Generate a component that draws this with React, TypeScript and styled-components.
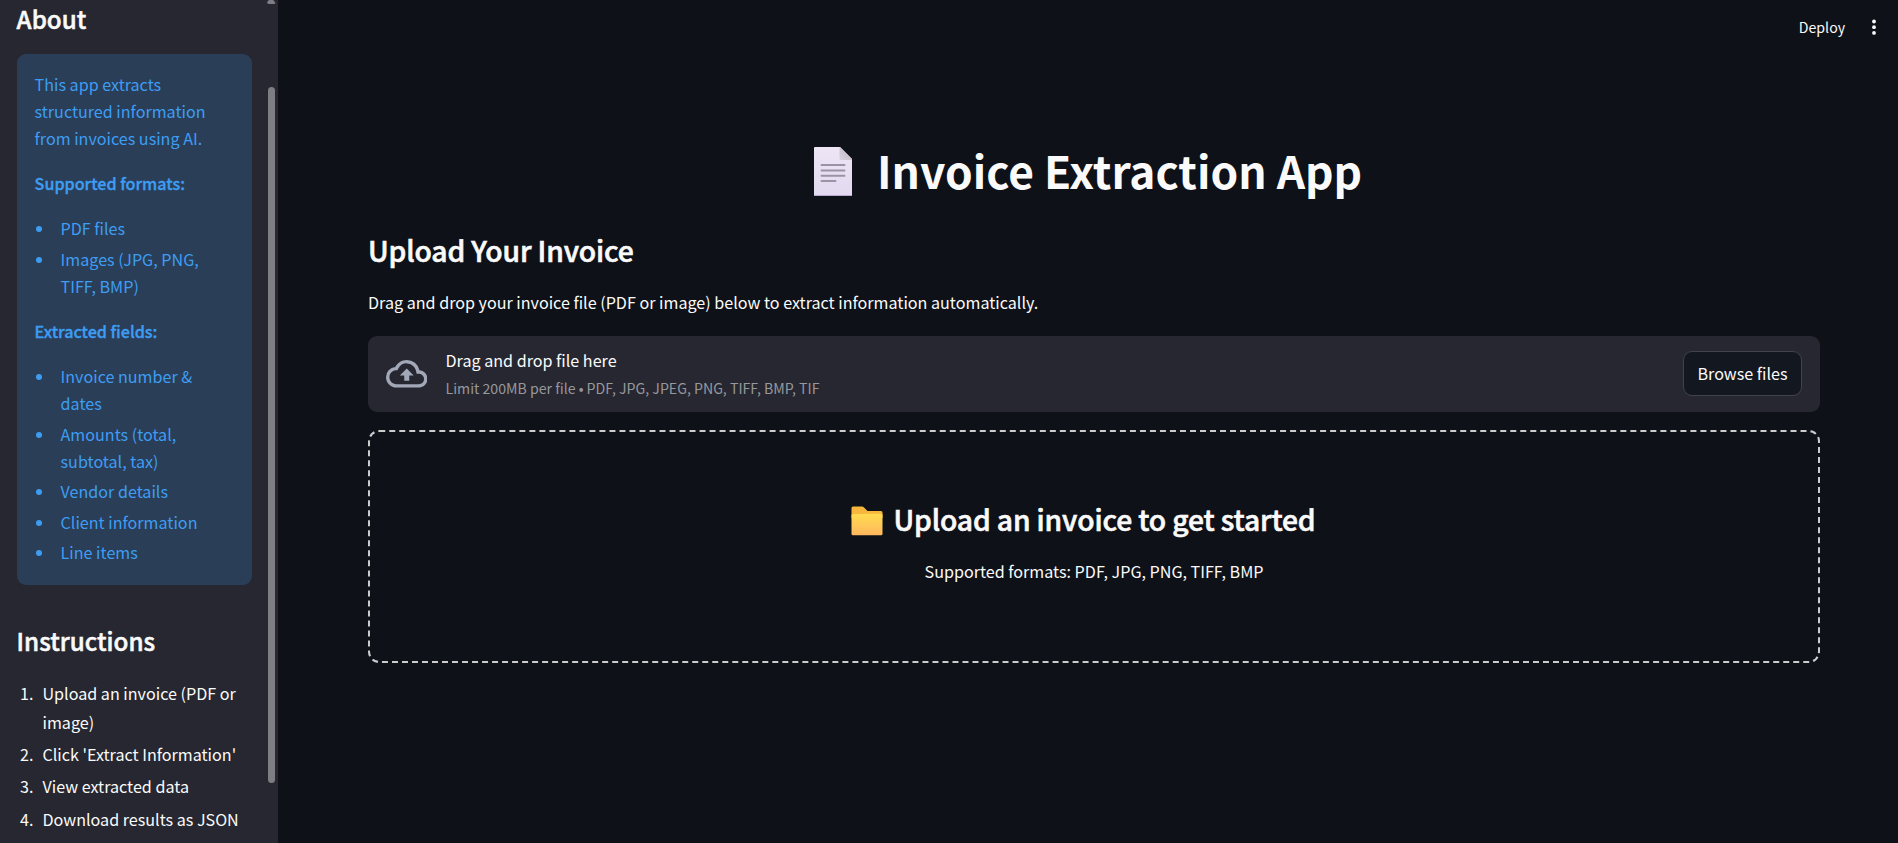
import React from "react";
import styled, { createGlobalStyle } from "styled-components";

const GlobalStyle = createGlobalStyle`
  * { box-sizing: border-box; }
  body {
    margin: 0;
    background: #0e1117;
    color: #fafafa;
    font-family: "Noto Sans CJK JP", "Noto Sans", sans-serif;
    font-size: 16.13px;
    line-height: 28.8px;
    overflow: hidden;
  }
  h1, h2, h3, p, ul, ol { margin: 0; padding: 0; }
  ul, ol { list-style: none; }
`;

const Shell = styled.div`
  display: flex;
  height: 843px;
  overflow: hidden;
`;

const Sidebar = styled.aside`
  display: flex;
  flex: 0 0 278px;
  background: #262730;
  overflow: hidden;
`;

const SidebarContent = styled.div`
  flex: 0 0 252px;
  padding: 3px 0 0 17px;
`;

const SidebarTitle = styled.h2`
  margin-left: -0.4px;
  font-size: 24.2px;
  font-weight: 500;
  -webkit-text-stroke: 0.5px currentColor;
  line-height: 32px;
  white-space: nowrap;
`;

const InfoBox = styled.section`
  margin: 19px 0 39.5px;
  height: 531px;
  padding: 17px 17.6px;
  border-radius: 9px;
  background: #2b3e57;
  color: #3d9df3;
  line-height: 27px;
`;

const InfoText = styled.p<{ $strong?: boolean }>`
  margin-bottom: 18px;
  font-weight: ${(p) => (p.$strong ? 500 : 400)};
  -webkit-text-stroke: ${(p) => (p.$strong ? "0.35px currentColor" : "0")};
  white-space: nowrap;
`;

const BulletList = styled.ul<{ $gap: number }>`
  display: flex;
  flex-direction: column;
  gap: ${(p) => p.$gap}px;
  margin-bottom: 18px;
`;

const Bullet = styled.li`
  display: flex;
  white-space: nowrap;

  &::before {
    content: "";
    flex: none;
    width: 6px;
    height: 6px;
    margin: 11px 18.6px 0 1.4px;
    border-radius: 50%;
    background: currentColor;
  }
`;

const Steps = styled.ol`
  display: flex;
  flex-direction: column;
  gap: 3.6px;
  margin-top: 22.3px;
`;

const Step = styled.li`
  display: flex;
  white-space: nowrap;
`;

const StepNumber = styled.span`
  flex: 0 0 25.5px;
  padding-left: 3px;
`;

const ScrollBar = styled.div`
  display: flex;
  flex-direction: column;
  align-items: center;
  width: 15px;
  margin-left: 12px;
`;

const ScrollArrow = styled.div`
  width: 9px;
  height: 4px;
  border-radius: 0 0 2px 2px;
  background: #7d7d83;
  clip-path: polygon(25% 0, 75% 0, 100% 75%, 100% 100%, 0 100%, 0 75%);
`;

const ScrollThumb = styled.div`
  width: 7px;
  height: 696px;
  margin-top: 83px;
  border-radius: 4px;
  background: #7d7d83;
`;

const Main = styled.main`
  flex: 1;
  display: flex;
  flex-direction: column;
`;

const TopBar = styled.header`
  display: flex;
  justify-content: flex-end;
  align-items: center;
  height: 54px;
  padding-right: 20px;
  gap: 25px;
  font-size: 14.13px;
`;

const Page = styled.div`
  display: flex;
  flex-direction: column;
  padding: 86px 78px 0 90px;
`;

const TitleRow = styled.div`
  display: flex;
  justify-content: center;
  gap: 25px;
  height: 60px;
  padding-right: 12px;
`;

const Title = styled.h1`
  font-size: 44.3px;
  font-weight: 700;
  line-height: 60px;
  white-space: nowrap;
`;

const DocumentIcon = styled.svg`
  flex: none;
  margin-top: 7px;
`;

const SectionTitle = styled.h3`
  font-size: 28.25px;
  font-weight: 500;
  letter-spacing: -0.14px;
  -webkit-text-stroke: 0.6px currentColor;
  line-height: 38px;
  white-space: nowrap;
`;

const UploadTitle = styled(SectionTitle)`
  margin: 30.7px 0 19.3px;
`;

const Lead = styled.p`
  line-height: 29px;
  white-space: nowrap;
`;

const Uploader = styled.section`
  display: flex;
  align-items: center;
  height: 76px;
  margin-top: 19px;
  padding: 0 18px 0 17.5px;
  border-radius: 9px;
  background: #262730;
`;

const UploaderText = styled.div`
  flex: 1;
  margin-left: 18.5px;
  padding-bottom: 2px;
`;

const DropLabel = styled.div`
  line-height: 27px;
`;

const LimitLabel = styled.div`
  margin-top: 3px;
  font-size: 14.13px;
  line-height: 22px;
  color: #97989c;
`;

const BrowseButton = styled.button`
  width: 119px;
  height: 45px;
  padding: 0 0 2px;
  border: 1px solid #41434c;
  border-radius: 9px;
  background: #131720;
  color: inherit;
  font: inherit;
  white-space: nowrap;
`;

const EmptyState = styled.section`
  display: flex;
  flex-direction: column;
  align-items: center;
  height: 233px;
  margin-top: 18px;
  padding-top: 67.7px;
  border: 2px dashed #cccccc;
  border-radius: 11.25px;
`;

const EmptyTitle = styled.div`
  display: flex;
  gap: 11px;
  margin-bottom: 19px;
  padding-right: 22px;
`;

const FolderIcon = styled.svg`
  flex: none;
  margin-top: 6px;
`;

const formats = [["PDF files"], ["Images (JPG, PNG,", "TIFF, BMP)"]];
const fields = [
  ["Invoice number &", "dates"],
  ["Amounts (total,", "subtotal, tax)"],
  ["Vendor details"],
  ["Client information"],
  ["Line items"],
];
const steps = [
  ["Upload an invoice (PDF or", "image)"],
  ["Click 'Extract Information'"],
  ["View extracted data"],
  ["Download results as JSON"],
];

const Lines = ({ lines }: { lines: string[] }) => (
  <span>
    {lines.map((line, i) => (
      <React.Fragment key={line}>
        {i > 0 && <br />}
        {line}
      </React.Fragment>
    ))}
  </span>
);

const Bullets = ({ items, gap }: { items: string[][]; gap: number }) => (
  <BulletList $gap={gap}>
    {items.map((lines) => (
      <Bullet key={lines[0]}>
        <Lines lines={lines} />
      </Bullet>
    ))}
  </BulletList>
);

export default function App() {
  return (
    <>
      <GlobalStyle />
      <Shell>
        <Sidebar>
          <SidebarContent>
            <SidebarTitle>About</SidebarTitle>
            <InfoBox>
              <InfoText>
                <Lines lines={["This app extracts", "structured information", "from invoices using AI."]} />
              </InfoText>
              <InfoText $strong>Supported formats:</InfoText>
              <Bullets items={formats} gap={4} />
              <InfoText $strong>Extracted fields:</InfoText>
              <Bullets items={fields} gap={3.6} />
            </InfoBox>
            <SidebarTitle>Instructions</SidebarTitle>
            <Steps>
              {steps.map((lines, i) => (
                <Step key={lines[0]}>
                  <StepNumber>{i + 1}.</StepNumber>
                  <Lines lines={lines} />
                </Step>
              ))}
            </Steps>
          </SidebarContent>
          <ScrollBar>
            <ScrollArrow />
            <ScrollThumb />
          </ScrollBar>
        </Sidebar>
        <Main>
          <TopBar>
            <span>Deploy</span>
            <svg width="8" height="18" viewBox="0 0 8 18" fill="#fafafa">
              <circle cx="4" cy="3.5" r="1.9" />
              <circle cx="4" cy="9.2" r="1.9" />
              <circle cx="4" cy="14.9" r="1.9" />
            </svg>
          </TopBar>
          <Page>
            <TitleRow>
              <DocumentIcon width="38" height="49" viewBox="0 0 38 49">
                <defs>
                  <linearGradient id="paper" x1="0" y1="0" x2="0" y2="1">
                    <stop offset="0" stopColor="#eee6f5" />
                    <stop offset="1" stopColor="#e2d8f0" />
                  </linearGradient>
                  <linearGradient id="fold" x1="0" y1="1" x2="1" y2="0">
                    <stop offset="0" stopColor="#d9d1df" />
                    <stop offset="1" stopColor="#bdb6c4" />
                  </linearGradient>
                </defs>
                <path d="M1 0H26L38 12V48Q38 49 37 49H1Q0 49 0 48V1Q0 0 1 0Z" fill="url(#paper)" />
                <path d="M0 48H38Q38 49 37 49H1Q0 49 0 48Z" fill="#b9a9cb" />
                <path d="M25.5 0H26L38 12V13H27Q25.5 13 25.5 11.5Z" fill="url(#fold)" />
                <path
                  d="M7.5 18H30.5M7.5 23.5H30.5M7.5 28.8H30.5M7.5 34H21.5"
                  stroke="#9b92a3"
                  strokeWidth="1.9"
                  strokeLinecap="round"
                />
              </DocumentIcon>
              <Title>Invoice Extraction App</Title>
            </TitleRow>
            <UploadTitle>Upload Your Invoice</UploadTitle>
            <Lead>
              Drag and drop your invoice file (PDF or image) below to extract information automatically.
            </Lead>
            <Uploader>
              <svg width="41.5" height="41.5" viewBox="0 0 24 24" fill="#a3a8b8">
                <path d="M19.35 10.04A7.49 7.49 0 0 0 12 4C9.11 4 6.6 5.64 5.35 8.04A5.994 5.994 0 0 0 0 14c0 3.31 2.69 6 6 6h13c2.76 0 5-2.24 5-5 0-2.64-2.05-4.78-4.65-4.96zM19 18H6c-2.21 0-4-1.79-4-4 0-2.05 1.53-3.76 3.56-3.97l1.07-.11.5-.95A5.469 5.469 0 0 1 12 6c2.62 0 4.88 1.86 5.39 4.43l.3 1.5 1.53.11A2.98 2.98 0 0 1 22 15c0 1.65-1.35 3-3 3zM8 13h2.55v3h2.9v-3H16l-4-4-4 4z" />
              </svg>
              <UploaderText>
                <DropLabel>Drag and drop file here</DropLabel>
                <LimitLabel>Limit 200MB per file • PDF, JPG, JPEG, PNG, TIFF, BMP, TIF</LimitLabel>
              </UploaderText>
              <BrowseButton>Browse files</BrowseButton>
            </Uploader>
            <EmptyState>
              <EmptyTitle>
                <FolderIcon width="32" height="30" viewBox="0 0 32 30">
                  <defs>
                    <linearGradient id="folderFront" x1="0" y1="0" x2="0" y2="1">
                      <stop offset="0" stopColor="#ffdc4f" />
                      <stop offset="1" stopColor="#ffb75e" />
                    </linearGradient>
                  </defs>
                  <path d="M0.5 2Q0.5 0.5 2 0.5H11Q12 0.5 13 1.5L16.5 5H30Q31.5 5 31.5 6.5V12H0.5Z" fill="#f6b73c" />
                  <path d="M0.5 9.5Q0.5 8 2 8H12.5Q14 8 15 7.7H30Q31.5 7.7 31.5 9V28Q31.5 29.3 30 29.3H2Q0.5 29.3 0.5 28Z" fill="url(#folderFront)" />
                </FolderIcon>
                <SectionTitle>Upload an invoice to get started</SectionTitle>
              </EmptyTitle>
              <Lead>Supported formats: PDF, JPG, PNG, TIFF, BMP</Lead>
            </EmptyState>
          </Page>
        </Main>
      </Shell>
    </>
  );
}
